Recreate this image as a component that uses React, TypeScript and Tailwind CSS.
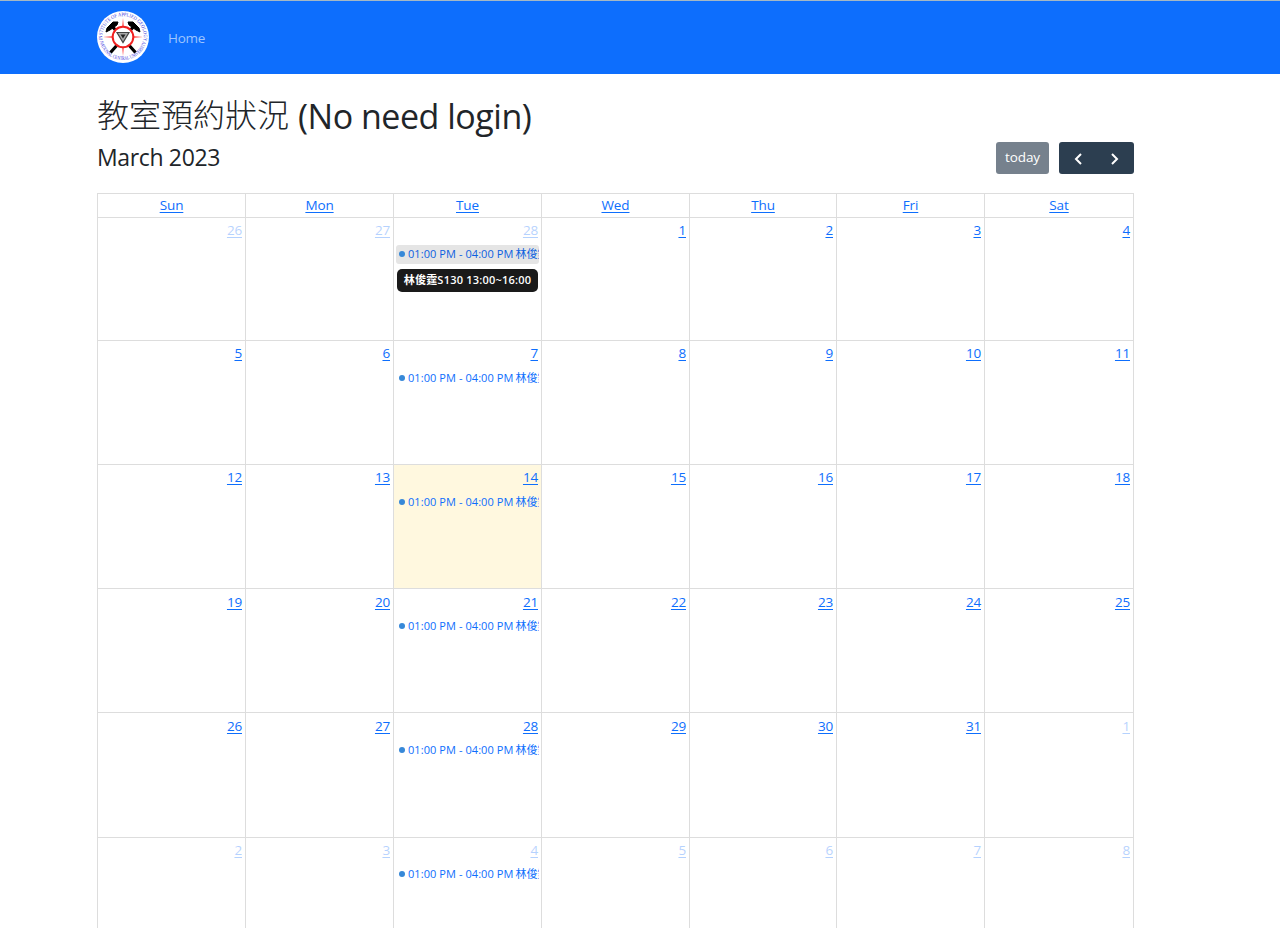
const days = ["Sun", "Mon", "Tue", "Wed", "Thu", "Fri", "Sat"];
const weeks = [
  [26, 27, 28, 1, 2, 3, 4],
  [5, 6, 7, 8, 9, 10, 11],
  [12, 13, 14, 15, 16, 17, 18],
  [19, 20, 21, 22, 23, 24, 25],
  [26, 27, 28, 29, 30, 31, 1],
  [2, 3, 4, 5, 6, 7, 8],
];
const columns = "grid grid-cols-[148px_148px_148px_148px_147px_148px_149px] ";

function outside(w: number, d: number) {
  return (w === 0 && d < 3) || (w === 4 && d === 6) || w === 5;
}

function Logo() {
  return (
    <svg viewBox="0 0 52 52" className="-mt-[2px] size-[52px] shrink-0">
      <defs>
        <path id="arcTop" d="M5.6 30 A20.8 20.8 0 1 1 46.4 30" />
        <path id="arcBottom" d="M2.6 29.5 A23.8 23.8 0 0 0 49.4 29.5" />
      </defs>
      <circle cx="26" cy="26" r="26" fill="#fff" />
      <g fill="#3333dd" fontFamily="Liberation Serif, serif" fontSize="5.2">
        <text><textPath href="#arcTop" startOffset="1" textLength="72" lengthAdjust="spacingAndGlyphs">INSTITUTE OF APPLIED GEOLOGY</textPath></text>
        <text><textPath href="#arcBottom" startOffset="1" textLength="63" lengthAdjust="spacingAndGlyphs">NATIONAL CENTRAL UNIVERSITY</textPath></text>
      </g>
      <path d="M14 14 L38.5 41.5 M38 14 L13.5 41.5" stroke="#000" strokeWidth="3.2" />
      <path d="M9 21 L10 17 L16 11 L21 11 L20 14 L13 19 Z" fill="#000" stroke="#000" />
      <path d="M43 21 L42 17 L36 11 L31 11 L32 14 L39 19 Z" fill="#000" stroke="#000" />
      <path d="M26 7 L26.8 17 H25.2 Z M26 45 L26.8 35 H25.2 Z M6 26 L16 25.2 V26.8 Z M46 26 L36 25.2 V26.8 Z" fill="#f22" />
      <circle cx="26" cy="26" r="10.3" fill="#fff" stroke="#f02020" strokeWidth="2" />
      <path d="M20 21.5 H32 L26 31.5 Z" fill="#aaa" stroke="#444" strokeWidth="1.2" />
      <path d="M23.5 23.5 H28.5 L26 27.5 Z" fill="#222" />
    </svg>
  );
}

function Event({ hovered }: { hovered: boolean }) {
  return (
    <div
      className={
        "mx-[2px] flex h-[19px] items-center overflow-hidden whitespace-nowrap rounded-[3px] pl-[3px] text-[11px] " +
        (hovered ? "bg-[#e5e5e5] text-[#0c5fe0]" : "text-[#0d6efd]")
      }
    >
      <span className="-mt-px mr-[3px] size-[6px] shrink-0 rounded-full bg-[#3788d8]" />
      <span className="w-[106px] shrink-0 tracking-[0.07px]">01:00 PM - 04:00 PM</span>
      <span className="ml-[1.5px] shrink-0">林俊霆S130</span>
    </div>
  );
}

export default function App() {
  return (
    <div className="h-[928px] overflow-hidden bg-white font-['Open_Sans','Noto_Sans_CJK_TC',sans-serif] text-[#212529]">
      <nav className="flex h-[74px] items-center border-t border-[#a5b8c4] bg-[#0d6efd] pl-[97px]">
        <Logo />
        <a className="ml-[19px] text-[13.5px] leading-[20px] tracking-[-0.3px] text-[#9ec5fe]">Home</a>
      </nav>
      <main className="ml-[97px] w-[1037px]">
        <h1 className="flex h-[64px] items-center whitespace-nowrap pt-[20px] text-[34px] leading-[44px]">
          <span className="-mt-[2px] w-[201px] text-[32px] font-light">教室預約狀況</span>
          <span className="tracking-[-0.48px]">(No need login)</span>
        </h1>
        <div className="mt-[4px] flex h-[32px] items-center justify-between">
          <h2 className="-mt-[2px] text-[23px] leading-[32px] tracking-[-0.35px]">March 2023</h2>
          <div className="flex gap-[10px]">
            <button className="h-[32px] w-[53px] rounded-[3px] bg-[#76818d] pb-[2px] text-[13.5px] tracking-[-0.1px] text-white">today</button>
            <div className="flex h-[32px] w-[75px] items-center justify-between rounded-[3px] bg-[#2c3e50] px-[14px]">
              <svg viewBox="0 0 10 14" className="mt-[2px] h-[14px] w-[10px]" fill="none" stroke="#fff" strokeWidth="2"><path d="M8 2 L3 7 L8 12" /></svg>
              <svg viewBox="0 0 10 14" className="mt-[2px] h-[14px] w-[10px]" fill="none" stroke="#fff" strokeWidth="2"><path d="M2 2 L7 7 L2 12" /></svg>
            </div>
          </div>
        </div>
        <div className="mt-[19px] border-l border-t border-[#ddd]">
          <div className={columns + "h-[24px]"}>
            {days.map((d) => (
              <div key={d} className="border-b border-r border-[#ddd] text-center text-[13.5px] font-medium leading-[22px] tracking-[-0.1px] text-[#0d6efd]">
                <a className="underline underline-offset-2">{d}</a>
              </div>
            ))}
          </div>
          {weeks.map((week, w) => (
            <div key={w} className={columns + (w === 0 ? "h-[123px]" : w === 4 ? "h-[125px]" : "h-[124px]")}>
              {week.map((n, d) => (
                <div key={d} className={"relative min-w-0 border-b border-r border-[#ddd] " + (w === 2 && d === 2 ? "bg-[#fff8df]" : "")}>
                  <div
                    className={
                      "pr-[3px] text-right text-[13.5px] leading-[21px] tracking-[-0.2px] text-[#0d6efd] " +
                      (w === 3 || w === 4 ? "pt-[3px] " : "pt-[2px] ") +
                      (w === 0 || w === 5 ? "h-[27px] " : "h-[28px] ") +
                      (outside(w, d) ? "opacity-30" : "")
                    }
                  >
                    <a className="underline underline-offset-2">{n}</a>
                  </div>
                  {d === 2 && <Event hovered={w === 0} />}
                  {w === 0 && d === 2 && (
                    <div className="absolute left-[3px] top-[51px] flex h-[23px] w-[141px] items-center justify-center whitespace-nowrap rounded-[5px] bg-[#1a1a1a] text-[11px] font-semibold tracking-[0.22px] text-white">
                      林俊霆S130 13:00~16:00
                    </div>
                  )}
                </div>
              ))}
            </div>
          ))}
        </div>
      </main>
    </div>
  );
}
